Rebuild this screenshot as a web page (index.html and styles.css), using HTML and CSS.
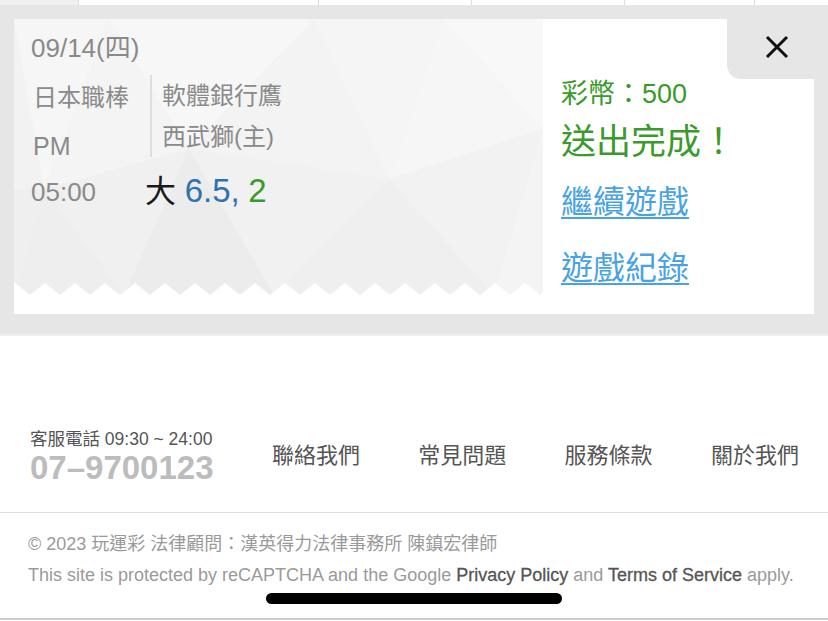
FILE: index.html
```html
<!DOCTYPE html>
<html lang="zh-Hant">
  <head>
    <meta charset="UTF-8" />
    <meta name="viewport" content="width=device-width, initial-scale=1.0" />
    <title>玩運彩 - 投注完成</title>
    <link rel="stylesheet" href="styles.css">
  </head>
  <body>
    <div class="table-peek">
      <div class="peek-cell first"></div>
      <div class="peek-cell wide"></div>
      <div class="peek-cell"></div>
      <div class="peek-cell"></div>
      <div class="peek-cell narrow"></div>
      <div class="peek-cell last"></div>
    </div>

    <div class="overlay">
      <div class="card">
        <div class="ticket">
          <div class="ticket-date">09/14(四)</div>
          <div class="ticket-match">
            <div class="league">
              <div>日本職棒</div>
              <div class="latin">PM</div>
            </div>
            <div class="teams">
              <div>軟體銀行鷹</div>
              <div>西武獅(主)</div>
            </div>
          </div>
          <div class="ticket-bet">
            <div class="bet-time">05:00</div>
            <div class="bet-pick">大 <span class="odds">6.5,</span> <span class="stake">2</span></div>
          </div>
        </div>

        <div class="result">
          <button class="close-tab" aria-label="關閉">
            <svg width="24" height="24" viewBox="0 0 24 24">
              <path d="M2 2 L22 22 M22 2 L2 22" stroke="#111" stroke-width="3" fill="none" />
            </svg>
          </button>
          <div class="result-body">
            <div class="coins">彩幣：500</div>
            <div class="done">送出完成！</div>
            <a class="result-link continue" href="#">繼續遊戲</a>
            <a class="result-link history" href="#">遊戲紀錄</a>
          </div>
        </div>
      </div>
    </div>

    <footer>
      <div class="footer-main">
        <div class="hotline">
          <div class="hotline-label">客服電話 09:30 ~ 24:00</div>
          <div class="hotline-number">07–9700123</div>
        </div>
        <a class="footer-link" href="#">聯絡我們</a>
        <a class="footer-link" href="#">常見問題</a>
        <a class="footer-link" href="#">服務條款</a>
        <a class="footer-link" href="#">關於我們</a>
      </div>
      <div class="footer-legal">
        <p class="copyright">© 2023 玩運彩 法律顧問：漢英得力法律事務所 陳鎮宏律師</p>
        <p class="recaptcha">This site is protected by reCAPTCHA and the Google <strong>Privacy Policy</strong> and <strong>Terms of Service</strong> apply.</p>
        <div class="home-bar"></div>
      </div>
    </footer>
  </body>
</html>
```

FILE: styles.css
```css
body {
  margin: 0;
  width: 828px;
  font-family: "Liberation Sans", "Noto Sans CJK TC", sans-serif;
  background-color: #ffffff;
  overflow: hidden;
}

/* the table row peeking out above the modal */
.table-peek {
  display: flex;
  height: 5px;
  background-color: #ffffff;
}

.peek-cell {
  width: 152px;
  border-right: 1px solid #dcdcdc;
}

.peek-cell.first {
  width: 78px;
  background-color: #f0f0f0;
}

.peek-cell.wide {
  width: 239px;
}

.peek-cell.narrow {
  width: 129px;
}

.peek-cell.last {
  flex: 1;
  border-right: none;
}

.overlay {
  background-color: #e6e6e6;
  padding: 14px 14px 20px;
  border-bottom: 2px solid #efefef;
}

.card {
  display: flex;
  height: 295px;
  background-color: #ffffff;
}

.ticket {
  width: 529px;
  height: 276px;
  padding: 14px 0 0 17px;
  box-sizing: border-box;
  position: relative;
  color: #8a8a8a;
  font-size: 24px;
  background-color: #f2f2f2;
  background-image: url("data:image/svg+xml,%3Csvg xmlns='http://www.w3.org/2000/svg' width='529' height='276'%3E%3Cpolygon points='0,0 95,0 30,170' fill='%23f6f6f6'/%3E%3Cpolygon points='95,0 300,0 175,130' fill='%23f7f7f7'/%3E%3Cpolygon points='95,0 175,130 30,170' fill='%23f4f4f4'/%3E%3Cpolygon points='300,0 430,0 375,160' fill='%23f5f5f5'/%3E%3Cpolygon points='300,0 375,160 175,130' fill='%23f3f3f3'/%3E%3Cpolygon points='430,0 529,0 529,110' fill='%23f8f8f8'/%3E%3Cpolygon points='430,0 529,110 375,160' fill='%23f6f6f6'/%3E%3Cpolygon points='0,170 30,170 0,276' fill='%23efefef'/%3E%3Cpolygon points='30,170 175,130 110,276' fill='%23f0f0f0'/%3E%3Cpolygon points='30,170 110,276 0,276' fill='%23eeeeee'/%3E%3Cpolygon points='175,130 375,160 260,276' fill='%23f1f1f1'/%3E%3Cpolygon points='175,130 260,276 110,276' fill='%23ececec'/%3E%3Cpolygon points='375,160 529,110 480,276' fill='%23f2f2f2'/%3E%3Cpolygon points='375,160 480,276 260,276' fill='%23efefef'/%3E%3Cpolygon points='529,110 529,276 480,276' fill='%23f4f4f4'/%3E%3C/svg%3E");
}

/* scalloped tear-off edge */
.ticket::after {
  content: "";
  position: absolute;
  left: 0;
  right: 0;
  bottom: 0;
  height: 12px;
  background-image: url("data:image/svg+xml,%3Csvg xmlns='http://www.w3.org/2000/svg' width='30' height='12'%3E%3Cpath d='M0 12 L15 0 L30 12 Z' fill='white'/%3E%3C/svg%3E");
  background-repeat: repeat-x;
  background-position: 16px 0;
}

.ticket-date {
  font-size: 26px;
  line-height: 30px;
}

.ticket-match {
  display: flex;
  align-items: flex-start;
  margin-top: 11px;
}

.league {
  width: 117px;
  line-height: 48px;
  padding-left: 2px;
}

.league .latin {
  font-size: 25px;
}

.teams {
  border-left: 2px solid #dedede;
  margin-top: 1px;
  padding-left: 10px;
  line-height: 41px;
}

.ticket-bet {
  display: flex;
  align-items: center;
  line-height: 40px;
  margin-top: 1px;
}

.bet-time {
  width: 114px;
  font-size: 26px;
}

.bet-pick {
  color: #1a1a1a;
  font-size: 31px;
}

.odds {
  color: #2e72b3;
  font-size: 33px;
}

.stake {
  color: #3a9a2c;
  font-size: 33px;
}

.result {
  flex: 1;
  display: flex;
  flex-direction: column;
}

.close-tab {
  align-self: flex-end;
  width: 87px;
  height: 60px;
  display: flex;
  align-items: center;
  justify-content: center;
  padding: 0 0 4px 13px;
  border: none;
  border-bottom-left-radius: 14px;
  background-color: #e6e6e6;
  cursor: pointer;
}

.result-body {
  display: flex;
  flex-direction: column;
  align-items: flex-start;
  padding-left: 18px;
  color: #3a9a2c;
}

.coins {
  font-size: 27px;
  line-height: 30px;
}

.done {
  font-size: 35px;
  line-height: 40px;
  margin-top: 13px;
}

.result-link {
  color: #4aa2e6;
  font-size: 32px;
  line-height: 40px;
  text-decoration: underline;
  text-underline-offset: 4px;
  text-decoration-thickness: 2px;
}

.result-link.continue {
  margin-top: 20px;
}

.result-link.history {
  margin-top: 26px;
}

footer {
  padding-top: 93px;
}

.footer-main {
  display: flex;
  align-items: center;
  justify-content: space-between;
  padding: 0 29px 25px 30px;
  border-bottom: 1px solid #dddddd;
}

.hotline-label {
  color: #555;
  font-size: 17.5px;
  line-height: 20px;
}

.hotline-number {
  color: #bcbcbc;
  font-size: 33px;
  font-weight: bold;
  line-height: 38px;
}

.footer-link {
  color: #555;
  font-size: 22px;
  text-decoration: none;
  margin-bottom: 10px;
}

.footer-legal {
  padding: 19px 0 0 28px;
  color: #9a9a9a;
  font-size: 18px;
  border-bottom: 2px solid #cccccc;
}

.footer-legal p {
  margin: 0;
  line-height: 24px;
}

.recaptcha {
  margin-top: 7px !important;
}

.recaptcha strong {
  color: #555;
  font-weight: normal;
  -webkit-text-stroke: 0.3px #555;
}

.home-bar {
  width: 296px;
  height: 11px;
  margin: 6px 0 14px 238px;
  border-radius: 6px;
  background-color: #000000;
}
```
